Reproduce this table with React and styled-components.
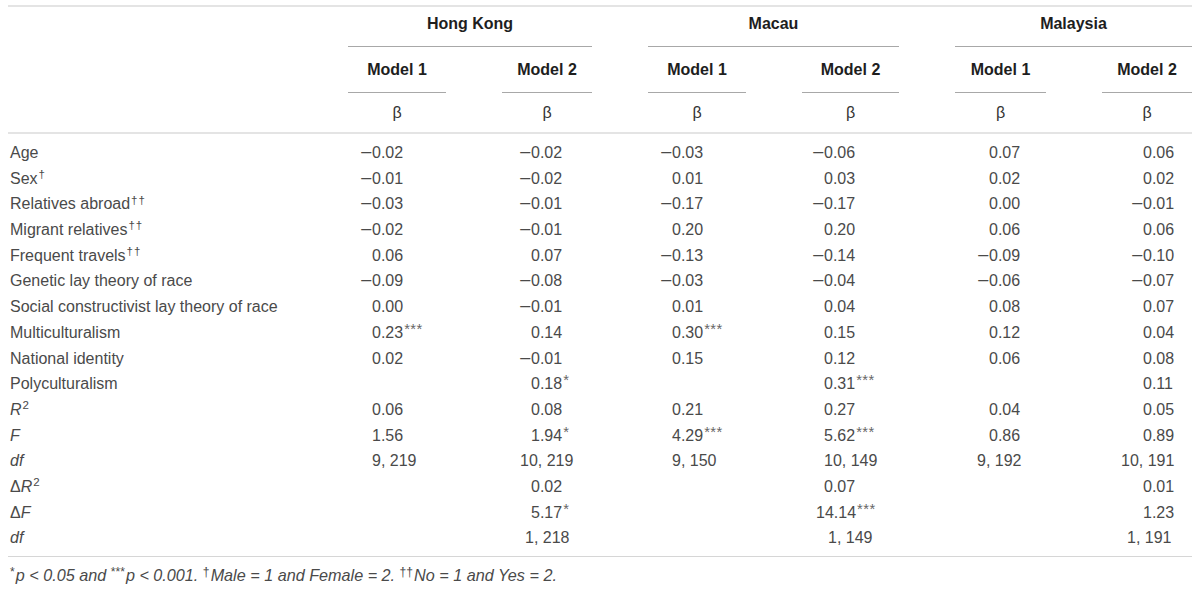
import React from "react";
import styled, { createGlobalStyle } from "styled-components";

const GlobalStyle = createGlobalStyle`
  html, body {
    margin: 0;
    padding: 0;
    background: #ffffff;
  }
  body {
    font-family: "Liberation Sans", Arial, sans-serif;
    color: #4a4a4a;
  }
`;

const COLS = "284px 98px 90px 98px 97px 91px 90px";

const Wrapper = styled.div`
  padding: 5px 8px 0 8px;
  width: 1184px;
`;

const Table = styled.div`
  border-top: 2px solid #e4e4e4;
`;

const Head = styled.div`
  display: grid;
  grid-template-columns: ${COLS};
  column-gap: 56px;
  border-bottom: 2px solid #e4e4e4;
`;

const Corner = styled.div`
  grid-row: 1 / span 3;
  grid-column: 1;
`;

const Group = styled.div`
  grid-column: span 2;
  text-align: center;
  padding: 7px 0 12px;
  line-height: 20px;
  font-size: 16px;
  font-weight: bold;
  color: #1e1e1e;
  border-bottom: 1px solid #a8a8a8;
`;

const Model = styled.div`
  text-align: center;
  padding: 13px 0 12px;
  line-height: 20px;
  font-size: 16px;
  font-weight: bold;
  color: #1e1e1e;
  border-bottom: 1px solid #a8a8a8;
`;

const Beta = styled.div`
  text-align: center;
  padding: 10px 0 9px;
  line-height: 20px;
  font-size: 16px;
  color: #333;
`;

const Body = styled.div`
  display: grid;
  grid-template-columns: ${COLS};
  grid-auto-rows: 25.7px;
  column-gap: 56px;
  padding: 6px 0 5px;
  border-bottom: 1px solid #d6d6d6;
  font-size: 16px;
  line-height: 25.7px;
`;

const Label = styled.div`
  padding-left: 2px;
  white-space: nowrap;
  color: #4a4a4a;
`;

const Cell = styled.div`
  white-space: nowrap;
  padding-left: ${(p) => p.$indent - p.$hang}px;
  color: #4a4a4a;
`;

const Minus = styled.span`
  display: inline-block;
  width: 12px;
  margin-left: -12px;
  transform: scaleX(1.3);
  transform-origin: left center;
`;

const Stars = styled.sup`
  font-size: 0.92em;
  line-height: 0;
  vertical-align: 0.26em;
  margin-left: 1px;
  letter-spacing: 0.5px;
  color: #666;
`;

const Dag = styled.sup`
  font-size: 0.72em;
  line-height: 0;
  vertical-align: 0.5em;
  letter-spacing: 1px;
  margin-left: 1px;
`;

const Em = styled.i`
  font-style: italic;
`;

const Note = styled.div`
  padding: 8px 0 0 2px;
  line-height: 20px;
  font-size: 16.2px;
  font-style: italic;
  color: #4a4a4a;
  white-space: nowrap;
`;

const NoteSup = styled.sup`
  font-size: 0.75em;
  line-height: 0;
  vertical-align: 0.42em;
  font-style: normal;
  margin-right: 1px;
`;

const INDENTS = [24, 29, 24, 22, 34, 41];

const groups = ["Hong Kong", "Macau", "Malaysia"];

const rows = [
  { label: "Age", vals: ["−0.02", "−0.02", "−0.03", "−0.06", "0.07", "0.06"] },
  { label: "Sex", dag: "†", vals: ["−0.01", "−0.02", "0.01", "0.03", "0.02", "0.02"] },
  { label: "Relatives abroad", dag: "††", vals: ["−0.03", "−0.01", "−0.17", "−0.17", "0.00", "−0.01"] },
  { label: "Migrant relatives", dag: "††", vals: ["−0.02", "−0.01", "0.20", "0.20", "0.06", "0.06"] },
  { label: "Frequent travels", dag: "††", vals: ["0.06", "0.07", "−0.13", "−0.14", "−0.09", "−0.10"] },
  { label: "Genetic lay theory of race", vals: ["−0.09", "−0.08", "−0.03", "−0.04", "−0.06", "−0.07"] },
  { label: "Social constructivist lay theory of race", vals: ["0.00", "−0.01", "0.01", "0.04", "0.08", "0.07"] },
  { label: "Multiculturalism", vals: ["0.23***", "0.14", "0.30***", "0.15", "0.12", "0.04"] },
  { label: "National identity", vals: ["0.02", "−0.01", "0.15", "0.12", "0.06", "0.08"] },
  { label: "Polyculturalism", vals: ["", "0.18*", "", "0.31***", "", "0.11"] },
  { label: <><Em>R</Em><Dag>2</Dag></>, vals: ["0.06", "0.08", "0.21", "0.27", "0.04", "0.05"] },
  { label: <Em>F</Em>, vals: ["1.56", "1.94*", "4.29***", "5.62***", "0.86", "0.89"] },
  { label: <Em>df</Em>, vals: ["9, 219", "10, 219", "9, 150", "10, 149", "9, 192", "10, 191"], hang: [0, 11, 0, 0, 12, 22] },
  { label: <>Δ<Em>R</Em><Dag>2</Dag></>, vals: ["", "0.02", "", "0.07", "", "0.01"] },
  { label: <>Δ<Em>F</Em></>, vals: ["", "5.17*", "", "14.14***", "", "1.23"], hang: [0, 0, 0, 8, 0, 0] },
  { label: <Em>df</Em>, vals: ["", "1, 218", "", "1, 149", "", "1, 191"], hang: [0, 6, 0, -4, 0, 16] },
];

function Value({ text }) {
  if (!text) return null;
  const m = text.match(/^(−?)([^*]*)(\**)$/);
  return (
    <>
      {m[1] && <Minus>−</Minus>}
      {m[2]}
      {m[3] && <Stars>{m[3]}</Stars>}
    </>
  );
}

export default function App() {
  return (
    <Wrapper>
      <GlobalStyle />
      <Table>
        <Head>
          <Corner />
          {groups.map((g) => (
            <Group key={g}>{g}</Group>
          ))}
          {groups.map((g) => (
            <React.Fragment key={g}>
              <Model>Model 1</Model>
              <Model>Model 2</Model>
            </React.Fragment>
          ))}
          {INDENTS.map((_, i) => (
            <Beta key={i}>β</Beta>
          ))}
        </Head>
        <Body>
          {rows.map((r, ri) => (
            <React.Fragment key={ri}>
              <Label>
                {r.label}
                {r.dag && <Dag>{r.dag}</Dag>}
              </Label>
              {r.vals.map((v, ci) => (
                <Cell key={ci} $indent={INDENTS[ci]} $hang={r.hang ? r.hang[ci] : 0}>
                  <Value text={v} />
                </Cell>
              ))}
            </React.Fragment>
          ))}
        </Body>
      </Table>
      <Note>
        <NoteSup>*</NoteSup>p &lt; 0.05 and <NoteSup>***</NoteSup>p &lt; 0.001. <NoteSup>†</NoteSup>Male = 1 and Female = 2.{" "}
        <NoteSup>††</NoteSup>No = 1 and Yes = 2.
      </Note>
    </Wrapper>
  );
}
